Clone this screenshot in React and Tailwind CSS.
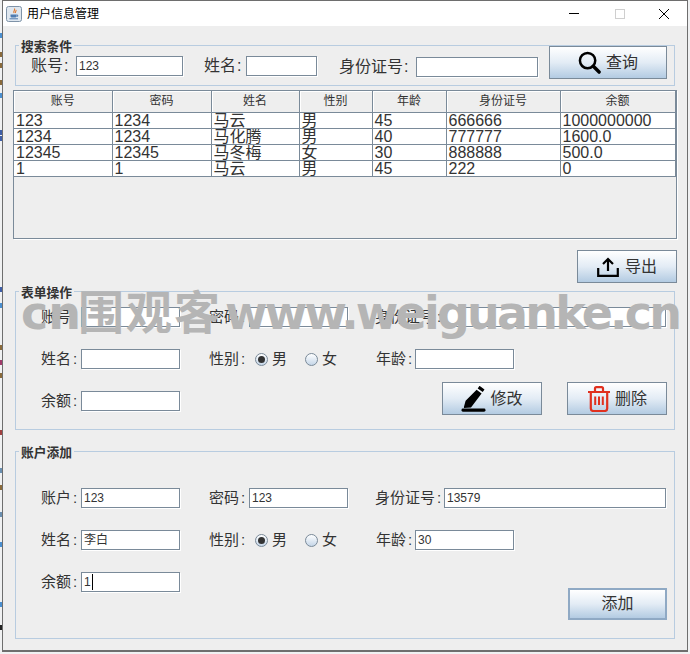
import React from "react";

const FONT = "font-['Liberation_Sans','Noto_Sans_CJK_SC',sans-serif]";

const TextBox = ({ value, className, caret }) => (
  <div
    className={`flex h-[20px] shrink-0 items-center overflow-hidden border border-[#7a8a99] bg-white pl-[2px] text-[12px] leading-none text-[#333] shadow-[1px_1px_0_#fff] ${className}`}
  >
    {value}
    {caret && <span className="ml-[1px] h-[16px] w-px bg-black" />}
  </div>
);

const Field = ({ label, value, labelClass, boxClass, caret }) => (
  <div className="flex items-center">
    <span className={`shrink-0 text-[15px] leading-[20px] text-[#333] ${labelClass}`}>
      {label}
      <span className="ml-[2px]">:</span>
    </span>
    <TextBox value={value} className={boxClass} caret={caret} />
  </div>
);

const SearchField = ({ label, value, labelClass, boxClass, className }) => (
  <div className={`flex items-center ${className}`}>
    <span className={`shrink-0 text-[16px] leading-[20px] text-[#333] ${labelClass}`}>
      {label}
      <span className="ml-[1px]">:</span>
    </span>
    <TextBox value={value} className={boxClass} />
  </div>
);

const Group = ({ title, className, children }) => (
  <section className={`relative ml-[2px] w-[660px] border border-[#b8cce0] ${className}`}>
    <h2 className="absolute -top-[7px] left-[3px] bg-[#eeeeee] px-[2px] text-[12.75px] leading-[15px] font-bold text-[#333]">
      {title}
    </h2>
    {children}
  </section>
);

const Button = ({ children, className }) => (
  <button
    type="button"
    className={`flex shrink-0 items-center justify-center border border-[#7a8a99] bg-gradient-to-b from-[#ffffff] via-[#e3ecf5] to-[#b3cbe2] text-[16px] leading-none text-[#333] ${className}`}
  >
    {children}
  </button>
);

const Radio = ({ label, checked, className }) => (
  <span className={`flex items-center ${className}`}>
    <span className="flex h-[13px] w-[13px] items-center justify-center rounded-full border border-[#7a8a99] bg-gradient-to-b from-[#ffffff] to-[#c5d6e8]">
      {checked && <span className="h-[7px] w-[7px] rounded-full bg-[#333]" />}
    </span>
    <span className="ml-[4px] text-[15px] leading-[20px] text-[#333]">{label}</span>
  </span>
);

const GenderRow = () => (
  <div className="ml-[5px] flex w-[121px] shrink-0 items-center">
    <Radio label="男" checked />
    <Radio label="女" className="ml-[18px]" />
  </div>
);

const JavaIcon = () => (
  <svg width="16" height="16" viewBox="0 0 16 16" className="shrink-0">
    <rect x="0.5" y="0.5" width="15" height="15" rx="2" fill="#dfe7ef" stroke="#7f93a8" />
    <path d="M8.5 2.5c1 1.5-1.5 2.5-.5 4.5M10 4c.5 1-1 1.5-.5 3" fill="none" stroke="#e0762a" strokeWidth="1.1" />
    <path d="M4.5 8.5h6v1.5c0 1-.8 1.5-1.5 1.5H6c-.8 0-1.5-.5-1.5-1.5z" fill="#4f7bb0" />
    <path d="M10.5 9h1.2v1.3h-1.2M3.5 12.8h8.5" fill="none" stroke="#4f7bb0" />
  </svg>
);

const SearchIcon = () => (
  <svg width="23" height="23" viewBox="0 0 24 24" className="shrink-0">
    <circle cx="10" cy="10" r="8" fill="none" stroke="#000" strokeWidth="2.6" />
    <path d="M16 16l6 6" stroke="#000" strokeWidth="3.6" strokeLinecap="round" />
  </svg>
);

const UploadIcon = () => (
  <svg width="22" height="20" viewBox="0 0 22 20" className="shrink-0">
    <path d="M1.2 11v7.8h19.6V11" fill="none" stroke="#000" strokeWidth="2.2" />
    <path d="M11 14V2.5M6 7l5-5 5 5" fill="none" stroke="#000" strokeWidth="2.2" />
  </svg>
);

const PenIcon = () => (
  <svg width="25" height="26" viewBox="0 0 25 26" className="shrink-0">
    <path d="M18.5 0.8l5 3.6-1.8 2.6-5-3.6zM15.6 4.8l5 3.6L10 22.4l-7 .6-.1-1 1.7-6.3z" fill="#000" transform="translate(0,-1)" />
    <rect x="0.5" y="22.5" width="24" height="3.2" rx="1.4" fill="#000" />
  </svg>
);

const TrashIcon = () => (
  <svg width="24" height="26" viewBox="0 0 24 26" className="shrink-0">
    <path d="M1 6h22M8 6V2.5c0-.8.6-1.4 1.4-1.4h5.2c.8 0 1.4.6 1.4 1.4V6" fill="none" stroke="#e0301e" strokeWidth="2.2" />
    <path d="M3.8 6v16.5c0 1.5 1 2.5 2.5 2.5h11.4c1.5 0 2.5-1 2.5-2.5V6" fill="none" stroke="#e0301e" strokeWidth="2.2" />
    <path d="M8.2 10.5v8.5M12 10.5v8.5M15.8 10.5v8.5" stroke="#e0301e" strokeWidth="2" />
  </svg>
);

const columns = ["账号", "密码", "姓名", "性别", "年龄", "身份证号", "余额"];
const colWidths = ["w-[98px]", "w-[99px]", "w-[88px]", "w-[73px]", "w-[74px]", "w-[114px]", "w-[115px]"];

const rows = [
  ["123", "1234", "马云", "男", "45", "666666", "1000000000"],
  ["1234", "1234", "马化腾", "男", "40", "777777", "1600.0"],
  ["12345", "12345", "马冬梅", "女", "30", "888888", "500.0"],
  ["1", "1", "马云", "男", "45", "222", "0"],
];

const UserTable = () => (
  <div className="h-[149px] w-[664px] border border-[#7a8a99] shadow-[1px_1px_0_#fff]">
    <table className="w-[661px] table-fixed border-collapse">
      <colgroup>
        {colWidths.map((w, i) => (
          <col key={i} className={w} />
        ))}
      </colgroup>
      <thead>
        <tr>
          {columns.map((c) => (
            <th
              key={c}
              className="h-[21px] border-r border-b border-[#7a8a99] bg-[#eeeeee] p-0 text-center text-[12px] leading-none font-normal text-[#333] shadow-[inset_1px_1px_0_#fff]"
            >
              {c}
            </th>
          ))}
        </tr>
      </thead>
      <tbody>
        {rows.map((row, i) => (
          <tr key={i}>
            {row.map((cell, j) => (
              <td
                key={j}
                className="h-[16px] overflow-hidden border-r border-b border-[#7a8a99] bg-white p-0 pl-[2px] text-[16px] leading-[15px] whitespace-nowrap text-[#333]"
              >
                {cell}
              </td>
            ))}
          </tr>
        ))}
      </tbody>
    </table>
  </div>
);

const Watermark = () => (
  <div className="pointer-events-none absolute top-[281px] left-[21px] font-['DejaVu_Sans','Noto_Sans_CJK_SC',sans-serif] font-bold whitespace-nowrap text-[#b5b5b5]">
    <span className="text-[46px] leading-[56px] tracking-[0px]">cn</span>
    <span className="ml-[-3px] font-['Noto_Sans_CJK_SC'] text-[46px] leading-[56px] tracking-[2px]">围观客</span>
    <span className="ml-[3px] text-[46px] leading-[56px] tracking-[-2.8px]">www.weiguanke.cn</span>
  </div>
);

// bits of the window behind, showing at the left edge
const edgeTicks = [
  [33, "bg-[#4a8fd0]"], [52, "bg-[#8a6a3a]"], [63, "bg-[#8a6a3a]"], [80, "bg-[#8a6a3a]"], [93, "bg-[#4a8fd0]"],
  [130, "bg-[#3f5fa8]"], [136, "bg-[#3f5fa8]"], [287, "bg-[#3f5fa8]"], [303, "bg-[#4a8fd0]"], [345, "bg-[#8a6a3a]"],
  [360, "bg-[#a03a6a]"], [373, "bg-[#8a6a3a]"], [430, "bg-[#a04040]"], [468, "bg-[#6a8fb0]"], [485, "bg-[#8a6a3a]"],
  [512, "bg-[#6a8fb0]"], [542, "bg-[#4a8fd0]"], [602, "bg-[#4a8fd0]"], [625, "bg-[#222222]"],
];

export default function App() {
  return (
    <div className={`relative h-[654px] w-[690px] overflow-hidden bg-[#f0f1f2] ${FONT}`}>
      {edgeTicks.map(([top, color]) => (
        <span key={top} className={`absolute left-0 h-[5px] w-[2px] ${color}`} style={{ top }} />
      ))}
      <div className="ml-[2px] flex h-[652px] w-[686px] flex-col border border-b-2 border-[#6e6e6e] bg-[#eeeeee]">
        <header className="flex h-[25px] shrink-0 items-center bg-white pl-[3px] text-[12px] text-black">
          <JavaIcon />
          <span className="ml-[5px]">用户信息管理</span>
          <div className="ml-auto flex items-center">
            <span className="h-px w-[10px] bg-black" />
            <span className="ml-[36px] h-[10px] w-[10px] border border-[#cfcfcf]" />
            <svg width="12" height="12" viewBox="0 0 12 12" className="mr-[17px] ml-[33px]">
              <path d="M1 1l10 10M11 1L1 11" stroke="#000" strokeWidth="1" />
            </svg>
          </div>
        </header>

        <main className="pl-[10px]">
          <Group title="搜索条件" className="mt-[19px] h-[41px]">
            <div className="flex items-start pl-[15px]">
              <SearchField label="账号" value="123" labelClass="w-[45px]" boxClass="w-[107px]" className="mt-[10px]" />
              <SearchField label="姓名" labelClass="w-[42px]" boxClass="w-[71px]" className="mt-[10px] ml-[21px]" />
              <SearchField label="身份证号" labelClass="w-[77px]" boxClass="w-[122px]" className="mt-[11px] ml-[22px]" />
              <Button className="mt-0 ml-[11px] h-[33px] w-[118px] gap-[5px]">
                <SearchIcon />
                查询
              </Button>
            </div>
          </Group>

          <div className="mt-[4px]">
            <UserTable />
          </div>

          <div className="mt-[11px] flex w-[664px] justify-end">
            <Button className="h-[33px] w-[100px] gap-[6px]">
              <UploadIcon />
              导出
            </Button>
          </div>

          <Group title="表单操作" className="mt-[8px] h-[139px] pt-[15px] pl-[25px]">
            <div className="flex">
              <Field label="账号" value="" labelClass="w-[40px]" boxClass="w-[99px]" />
              <div className="ml-[29px]">
                <Field label="密码" value="" labelClass="w-[40px]" boxClass="w-[99px]" />
              </div>
              <div className="ml-[27px]">
                <Field label="身份证号" value="" labelClass="w-[69px]" boxClass="w-[222px]" />
              </div>
            </div>
            <div className="mt-[22px] flex">
              <Field label="姓名" value="" labelClass="w-[40px]" boxClass="w-[99px]" />
              <span className="ml-[29px] w-[41px] text-[15px] leading-[20px] text-[#333]">
                性别<span className="ml-[2px]">:</span>
              </span>
              <GenderRow />
              <Field label="年龄" value="" labelClass="w-[39px]" boxClass="w-[99px]" />
            </div>
            <div className="mt-[13px] flex items-start">
              <div className="mt-[9px]">
                <Field label="余额" value="" labelClass="w-[40px]" boxClass="w-[99px]" />
              </div>
              <Button className="ml-[262px] h-[33px] w-[100px] gap-[4px]">
                <PenIcon />
                修改
              </Button>
              <Button className="ml-[25px] h-[33px] w-[100px] gap-[4px]">
                <TrashIcon />
                删除
              </Button>
            </div>
          </Group>

          <Group title="账户添加" className="mt-[21px] h-[188px] pt-[36px] pl-[25px]">
            <div className="flex">
              <Field label="账户" value="123" labelClass="w-[40px]" boxClass="w-[99px]" />
              <div className="ml-[29px]">
                <Field label="密码" value="123" labelClass="w-[40px]" boxClass="w-[99px]" />
              </div>
              <div className="ml-[27px]">
                <Field label="身份证号" value="13579" labelClass="w-[69px]" boxClass="w-[222px]" />
              </div>
            </div>
            <div className="mt-[22px] flex">
              <Field label="姓名" value="李白" labelClass="w-[40px]" boxClass="w-[99px]" />
              <span className="ml-[29px] w-[41px] text-[15px] leading-[20px] text-[#333]">
                性别<span className="ml-[2px]">:</span>
              </span>
              <GenderRow />
              <Field label="年龄" value="30" labelClass="w-[39px]" boxClass="w-[99px]" />
            </div>
            <div className="mt-[22px] flex items-start">
              <Field label="余额" value="1" labelClass="w-[40px]" boxClass="w-[99px]" caret />
              <Button className="mt-[16px] ml-[388px] h-[32px] w-[99px] border-2 border-[#8fa9c4]">
                添加
              </Button>
            </div>
          </Group>
        </main>
      </div>
      <Watermark />
    </div>
  );
}
